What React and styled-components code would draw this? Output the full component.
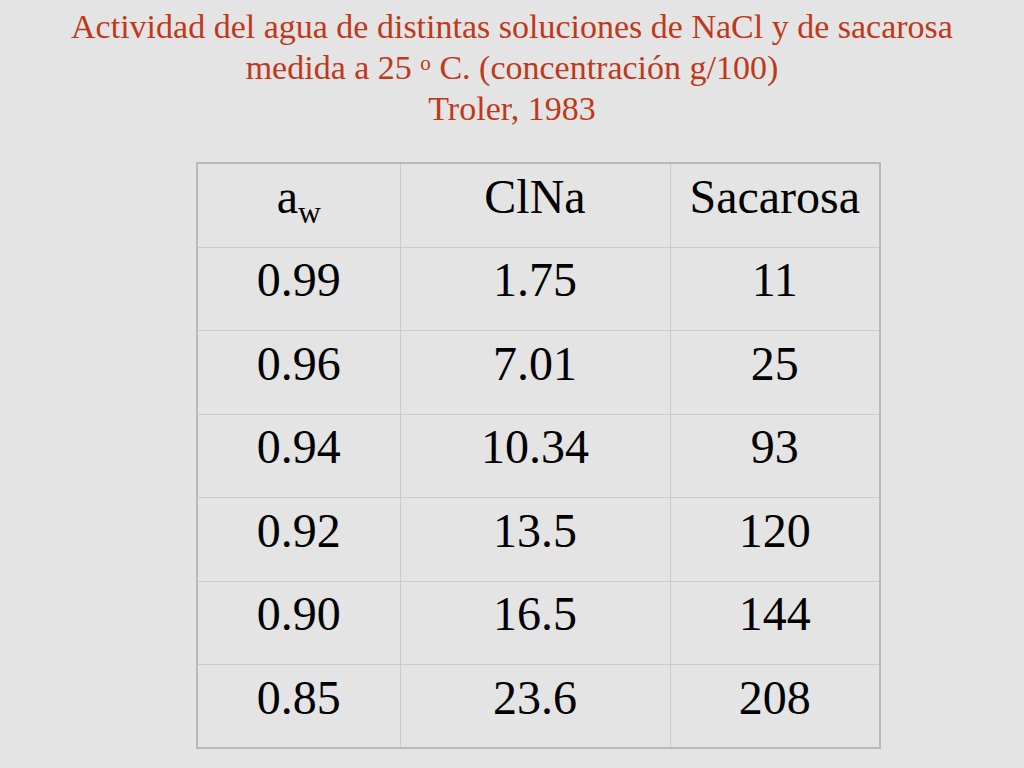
import styled, { createGlobalStyle } from 'styled-components';

const rows = [
  ['0.99', '1.75', '11'],
  ['0.96', '7.01', '25'],
  ['0.94', '10.34', '93'],
  ['0.92', '13.5', '120'],
  ['0.90', '16.5', '144'],
  ['0.85', '23.6', '208'],
];

export default function App() {
  return (
    <>
      <GlobalStyle />
      <SSlide>
        <STitle>
          Actividad del agua de distintas soluciones de NaCl y de sacarosa
          <br />
          medida a 25 <SDegree>o</SDegree> C. (concentración g/100)
          <br />
          Troler, 1983
        </STitle>
        <STable>
          <colgroup>
            <col style={{ width: 203 }} />
            <col style={{ width: 270 }} />
            <col style={{ width: 210 }} />
          </colgroup>
          <thead>
            <SRow $head>
              <SCell>
                a<SSub>w</SSub>
              </SCell>
              <SCell>ClNa</SCell>
              <SCell>Sacarosa</SCell>
            </SRow>
          </thead>
          <tbody>
            {rows.map((r) => (
              <SRow key={r[0]}>
                {r.map((v, i) => (
                  <SCell key={i}>{v}</SCell>
                ))}
              </SRow>
            ))}
          </tbody>
        </STable>
      </SSlide>
    </>
  );
}

const GlobalStyle = createGlobalStyle`
  html, body {
    margin: 0;
    padding: 0;
    background: #e4e4e4;
  }
`;

const SSlide = styled.main`
  width: 1024px;
  height: 768px;
  overflow: hidden;
  background: #e4e4e4;
  font-family: "Liberation Serif", "Times New Roman", serif;
`;

const STitle = styled.h1`
  margin: 0;
  padding-top: 6px;
  text-align: center;
  font-weight: normal;
  font-size: 34px;
  line-height: 41px;
  color: #c0381a;
`;

const SDegree = styled.sup`
  font-size: 0.62em;
  line-height: 0;
  vertical-align: 0.45em;
`;

const STable = styled.table`
  margin: 33px 0 0 196px;
  width: 683px;
  table-layout: fixed;
  border-collapse: collapse;
  border: 2px solid #b9b9b9;
  color: #000;
`;

const SRow = styled.tr`
  height: ${(p) => (p.$head ? '84px' : '83.5px')};
`;

const SCell = styled.td`
  padding: 0 0 18px;
  border: 1px solid #cbcbcb;
  text-align: center;
  vertical-align: middle;
  font-size: 48px;
  font-weight: normal;
`;

const SSub = styled.sub`
  font-size: 0.66em;
  line-height: 0;
  vertical-align: -0.3em;
`;
